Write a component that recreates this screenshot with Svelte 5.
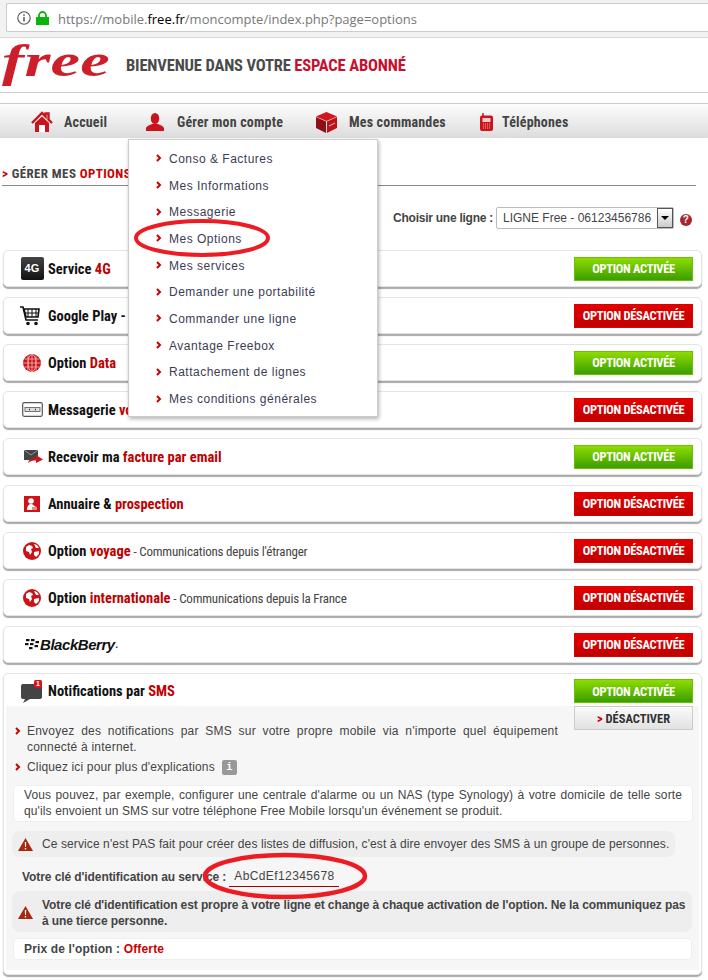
<script>
  const menu = ['Conso & Factures','Mes Informations','Messagerie','Mes Options','Mes services','Demander une portabilité','Commander une ligne','Avantage Freebox','Rattachement de lignes','Mes conditions générales'];
  const cards = [
    {icon:'4g', a:'Service ', r:'4G', on:true},
    {icon:'cart', a:'Google Play - ', r:'', on:false, wide:true},
    {icon:'data', a:'Option ', r:'Data', on:true},
    {icon:'tape', a:'Messagerie ', r:'vocale', on:false},
    {icon:'mail', a:'Recevoir ma ', r:'facture par email', on:true},
    {icon:'book', a:'Annuaire & ', r:'prospection', on:false},
    {icon:'globe', a:'Option ', r:'voyage', s:' - Communications depuis l\'étranger', on:false},
    {icon:'globe', a:'Option ', r:'internationale', s:' - Communications depuis la France', on:false},
    {icon:'bb', a:'', r:'', on:false}
  ];
</script>

{#snippet chev()}
  <svg class="chev" width="6" height="8" viewBox="0 0 6 8"><path d="M1 1l3 3-3 3" fill="none" stroke="#c00" stroke-width="2"/></svg>
{/snippet}

{#snippet warn()}
  <svg width="15" height="13" viewBox="0 0 15 13"><path d="M7.5 0L15 13H0z" fill="#a5290f"/><path d="M6.8 4h1.4l-.2 5H7zM6.8 10h1.4v1.5H6.8z" fill="#fff"/></svg>
{/snippet}

{#snippet icon(k)}
  {#if k==='4g'}
    <span class="i4g">4G</span>
  {:else if k==='cart'}
    <svg class="cart" width="20" height="20" viewBox="0 0 20 20"><path d="M0 1h3l3 13h12" fill="none" stroke="#111" stroke-width="1.6"/><path d="M4 3h15l-1 8H6z" fill="none" stroke="#111" stroke-width="1.6"/><path d="M8 3v8M12 3v8M16 3v8M5 7h14" stroke="#111" stroke-width="1"/><circle cx="8" cy="17.5" r="1.8" fill="#111"/><circle cx="16" cy="17.5" r="1.8" fill="#111"/></svg>
  {:else if k==='data'}
    <svg width="18" height="18" viewBox="0 0 18 18"><circle cx="9" cy="9" r="9" fill="#cc1418"/><g fill="none" stroke="#f6b9b9" stroke-width=".8"><ellipse cx="9" cy="9" rx="4" ry="8.5"/><path d="M9 0v18M0 9h18M1.5 5h15M1.5 13h15M5 1.5v15M13 1.5v15"/></g></svg>
  {:else if k==='tape'}
    <svg width="21" height="15" viewBox="0 0 21 15"><rect x=".7" y=".7" width="19.6" height="13.6" rx="1.5" fill="#fff" stroke="#555" stroke-width="1.2"/><rect x="3" y="5.5" width="15" height="4" fill="#ddd" stroke="#555" stroke-width=".8"/><path d="M7 7.5h1M13 7.5h1" stroke="#222" stroke-width="1.4"/></svg>
  {:else if k==='mail'}
    <svg class="mail" width="19" height="14" viewBox="0 0 19 14"><path d="M0 0h14v10H0z" fill="#444"/><path d="M0 0l7 5 7-5" fill="none" stroke="#aaa" stroke-width=".8"/><path d="M4 13c1-4 4-5 8-5V5l7 4.500-7 3.500v-2.500c-3 0-6 .5-8 2.500z" fill="#d3141c"/></svg>
  {:else if k==='book'}
    <svg width="16" height="16" viewBox="0 0 16 16"><rect width="16" height="16" fill="#cc1418"/><circle cx="7" cy="5" r="2.800" fill="#fff"/><path d="M3 13c0-3 2-5 4-5s2 1 5 3v3H3z" fill="#fff"/><path d="M8 11h5v3H8z" fill="#e88"/></svg>
  {:else if k==='globe'}
    <svg width="18" height="18" viewBox="0 0 18 18"><circle cx="9" cy="9" r="9" fill="#cc1418"/><path d="M3 5l3-2 3 1 1 2-2 1 1 3-2 3-1-3-3-1zM11 2l3 1 2 3-3 0zM11 10l5-1 0 3-3 3-2-2z" fill="#fff"/></svg>
  {:else if k==='bb'}
    <span class="bb">
      <svg width="15" height="12" viewBox="0 0 15 12"><g fill="#111"><rect x="2" y="0" width="3.500" height="2.200"/><rect x="7" y="0" width="3.500" height="2.200"/><rect x="1" y="4" width="3.500" height="2.200"/><rect x="6" y="4" width="3.500" height="2.200"/><rect x="11.500" y="2" width="3.500" height="2.200"/><rect x="10.500" y="6" width="3.500" height="2.200"/><rect x="5" y="8" width="3.500" height="2.200"/></g></svg>
      <span>BlackBerry</span><small>.</small>
    </span>
  {/if}
{/snippet}

<div class="page">
  <div class="chrome">
    <div class="url">
      <svg class="info" width="14" height="14" viewBox="0 0 14 14"><circle cx="7" cy="7" r="6.200" fill="none" stroke="#555" stroke-width="1.100"/><path d="M7 6v4.500M7 3.300v1.500" stroke="#555" stroke-width="1.500"/></svg>
      <svg width="13" height="14" viewBox="0 0 13 14"><path d="M3 6V4.500a3.500 3.500 0 0 1 7 0V6" fill="none" stroke="#0ab40a" stroke-width="1.800"/><rect y="6" width="13" height="8" fill="#0ab40a"/></svg>
      <span class="addr">https://mobile.<b>free.fr</b>/moncompte/index.php?page=options</span>
    </div>
  </div>

  <header class="head">
    <svg class="logo" width="112" height="46" viewBox="0 0 112 46"><text x="2" y="34" textLength="108" lengthAdjust="spacingAndGlyphs">free</text></svg>
    <h1>BIENVENUE DANS VOTRE <em>ESPACE ABONNÉ</em></h1>
  </header>

  <nav class="nav">
    <div class="nv n1">
      <svg width="22" height="22" viewBox="0 0 22 22"><path d="M1 12L11 2l3.500 3.500V2.500h3v6L21 12" fill="none" stroke="#c8141c" stroke-width="2.400"/><path d="M4 12v9h14v-9L11 5.500z" fill="#c8141c"/><path d="M8 14h6v7H8z" fill="#fff"/></svg>
      <span>Accueil</span>
    </div>
    <div class="nv n2">
      <svg width="18" height="18" viewBox="0 0 18 18"><ellipse cx="9" cy="5.500" rx="4.200" ry="5.500" fill="#c8141c"/><path d="M0 18v-2.500c0-2.500 4-3.500 6-4.500h6c2 1 6 2 6 4.500V18z" fill="#c8141c"/></svg>
      <span>Gérer mon compte</span>
    </div>
    <div class="nv n3">
      <svg width="21" height="21" viewBox="0 0 21 21"><path d="M10.500 0L21 4.500 10.500 9 0 4.500z" fill="#d3141c"/><path d="M0 5l10 4.500V21L0 16z" fill="#8f0f14"/><path d="M21 5l-10 4.500V21l10-5z" fill="#bd1219"/><path d="M13 14l6-3" stroke="#f4b4b4" stroke-width="1"/></svg>
      <span>Mes commandes</span>
    </div>
    <div class="nv n4">
      <svg width="13" height="18" viewBox="0 0 13 18"><path d="M3 0v3" stroke="#c8141c" stroke-width="1.500"/><rect y="2.500" width="13" height="15.500" rx="2" fill="#c8141c"/><rect x="2.500" y="5" width="8" height="4" fill="#f4cccc"/><path d="M3 11h7M3 13h7M3 15h7" stroke="#f0a0a0" stroke-width="1" stroke-dasharray="1 1"/></svg>
      <span>Téléphones</span>
    </div>

    <ul class="menu">
      {#each menu as m}
        <li>{@render chev()}<span>{m}</span></li>
      {/each}
    </ul>
  </nav>

  <div class="crumb"><i>&gt;</i> GÉRER MES <em>OPTIONS</em></div>

  <div class="line">
    <label for="sel">Choisir une ligne :</label>
    <div class="select" id="sel">
      <span>LIGNE Free - 06123456786</span>
      <div class="arrow"></div>
    </div>
    <span class="help">?</span>
  </div>

  <main class="list">
    {#each cards as c}
      <section class="card">
        <div class={c.icon==='bb' ? 'ic auto' : 'ic'}>{@render icon(c.icon)}</div>
        <div class="title">{c.a}<em>{c.r}</em>{#if c.s}<span class="sub">{c.s}</span>{/if}</div>
        <div class={c.on ? 'btn on' : 'btn off'}>{c.on ? 'OPTION ACTIVÉE' : 'OPTION DÉSACTIVÉE'}</div>
      </section>
    {/each}

    <section class="card big">
      <div class="bighead">
        <div class="ic">
          <span class="bubble">
            <svg width="22" height="23" viewBox="0 0 22 23"><path d="M3 4h17a2 2 0 0 1 2 2v11a2 2 0 0 1-2 2H10l-7 4 2-4H3a2 2 0 0 1-2-2V6a2 2 0 0 1 2-2z" fill="#444"/><rect x="14" y="0" width="8" height="8" rx="1.500" fill="#d3141c"/></svg>
            <b>1</b>
          </span>
        </div>
        <div class="title">Notifications par <em>SMS</em></div>
        <div class="btn on">OPTION ACTIVÉE</div>
      </div>
      <div class="inner">
        <div class="toprow">
          <div class="bul">
            <p class="just">{@render chev()}<span>Envoyez des notifications par SMS sur votre propre mobile via n'importe quel équipement connecté à internet.</span></p>
            <p class="click">{@render chev()}<span>Cliquez ici pour plus d'explications</span><span class="ii">i</span></p>
          </div>
          <div class="btn des"><i>&gt;</i> DÉSACTIVER</div>
        </div>
        <div class="box just2">Vous pouvez, par exemple, configurer une centrale d'alarme ou un NAS (type Synology) à votre domicile de telle sorte qu'ils envoient un SMS sur votre téléphone Free Mobile lorsqu'un événement se produit.</div>
        <div class="warn w1">{@render warn()}<span>Ce service n'est PAS fait pour créer des listes de diffusion, c'est à dire envoyer des SMS à un groupe de personnes.</span></div>
        <div class="key"><b>Votre clé d'identification au service :</b><span class="val">AbCdEf12345678</span></div>
        <div class="warn w2">{@render warn()}<b>Votre clé d'identification est propre à votre ligne et change à chaque activation de l'option. Ne la communiquez pas à une tierce personne.</b></div>
        <div class="box price"><b>Prix de l'option : <em>Offerte</em></b></div>
      </div>
    </section>
  </main>

  <svg class="ring r1" width="142" height="44" viewBox="0 0 142 44"><ellipse cx="71" cy="22" rx="66" ry="17" fill="none" stroke="#ed1c24" stroke-width="4"/></svg>
  <svg class="ring r2" width="170" height="50" viewBox="0 0 170 50"><ellipse cx="85" cy="25" rx="80" ry="21" fill="none" stroke="#ed1c24" stroke-width="4.500"/></svg>
</div>

<style>
  :global(body) { margin: 0; background: #fff; }
  .page { position: relative; width: 708px; height: 980px; overflow: hidden; font-family: "Liberation Sans", Arial, sans-serif; font-size: 12px; color: #444; letter-spacing: .15px; }
  em { font-style: normal; }

  .chrome { background: #f2f2f2; border-bottom: 1px solid #d8d8d8; padding: 3px 0 0 6px; box-sizing: border-box; height: 38px; }
  .url { height: 29px; background: #fff; border: 1px solid #ccc; border-right: 0; border-radius: 2px 0 0 2px; display: flex; align-items: center; box-sizing: border-box; padding-left: 10px; gap: 5px; }
  .addr { font-family: "Open Sans", sans-serif; font-size: 13px; color: #777; margin: 2px 0 0 4px; white-space: nowrap; letter-spacing: 0; }
  .addr b { font-weight: 400; color: #000; }

  .head { height: 55px; border-bottom: 1px solid #ccc; box-sizing: border-box; display: flex; align-items: center; position: relative; }
  .logo { flex: none; }
  .logo text { font-family: "Liberation Serif", serif; font-style: italic; font-weight: 700; font-size: 46px; fill: #cd1f2b; }
  h1 { margin: 0 0 0 14px; font-family: Roboto, sans-serif; font-stretch: 75%; font-weight: 700; font-size: 16.500px; color: #4a4a4a; letter-spacing: -.15px; white-space: nowrap; }
  h1 em { color: #c8102e; }

  .nav { margin-top: 10px; height: 35px; box-sizing: border-box; border-top: 1px solid #ccc; padding-top: 2px; background: linear-gradient(#fdfdfd, #dcdcdc); display: flex; align-items: center; padding-left: 31px; position: relative; z-index: 2; }
  .nv { display: flex; align-items: center; font-family: Roboto, sans-serif; font-stretch: 75%; font-weight: 700; font-size: 14px; letter-spacing: .18px; color: #444; white-space: nowrap; }
  .n1 { width: 115px; gap: 11px; }
  .n2 { width: 170px; gap: 13px; }
  .n3 { width: 164px; gap: 12px; }
  .n4 { gap: 9px; }

  .menu { position: absolute; left: 128px; top: 35px; width: 250px; height: 278px; margin: 0; padding: 5px 0 0; list-style: none; box-sizing: border-box; background: #fff; border: 1px solid #ccc; box-shadow: 1px 2px 4px rgba(0,0,0,.3); font-family: "Liberation Sans", sans-serif; }
  .menu li { height: 26.700px; display: flex; align-items: center; padding-left: 27px; color: #3c3c55; letter-spacing: .5px; white-space: nowrap; }
  .menu span { position: relative; top: .5px; left: -1px; }
  .chev { flex: none; margin-right: 8px; }

  .crumb { height: 48px; margin: 0 12px 0 2px; box-sizing: border-box; border-bottom: 1px solid #888; padding-top: 28px; font-size: 13px; font-family: Roboto, sans-serif; font-stretch: 75%; font-weight: 700; color: #444; letter-spacing: .4px; }
  .crumb i { font-style: normal; color: #c00; }
  .crumb em { color: #c00; }

  .line { display: flex; align-items: center; justify-content: flex-end; height: 22px; margin: 21px 16px 0 0; }
  label { font-weight: 700; color: #444; margin-right: 3px; letter-spacing: -.25px; }
  .select { width: 178px; height: 22px; box-sizing: border-box; border: 1px solid #bbb; border-radius: 2px; background: #fff; display: flex; align-items: center; padding-left: 6px; color: #444; letter-spacing: 0; white-space: nowrap; position: relative; }
  .arrow { position: absolute; right: 0; top: 0; width: 16px; height: 20px; box-sizing: border-box; border: 1px solid #555; background: linear-gradient(#fff, #ccc); }
  .arrow::after { content: ""; position: absolute; left: 3px; top: 7px; border: 4px solid transparent; border-top: 4px solid #000; }
  .help { width: 12px; height: 12px; border-radius: 50%; background: #a8262a; color: #fff; font: 700 10px/12px "Liberation Sans", sans-serif; text-align: center; margin: 4px 0 0 6px; }

  .list { margin: 21px 0 0 3px; width: 699px; display: flex; flex-direction: column; gap: 10px; }
  .card { height: 37px; box-sizing: border-box; background: #fff; border: 1px solid #e4e4e4; border-radius: 5px; box-shadow: 0 2px 1px #aaa; display: flex; align-items: center; padding-right: 8px; }
  .ic { width: 44px; flex: none; display: flex; justify-content: center; align-items: center; padding-left: 12px; box-sizing: border-box; }
  .ic.auto { width: auto; padding-left: 20px; }
  .cart { margin-right: 5px; }
  .mail { margin-left: 2px; }
  .title { flex: 1; font-family: Roboto, sans-serif; font-stretch: 75%; font-weight: 700; font-size: 14.500px; color: #111; letter-spacing: 0; white-space: pre; padding-top: 1px; }
  .title em { color: #c00000; }
  .sub { font-weight: 400; color: #444; letter-spacing: -.2px; font-size: 13px; }
  .i4g { display: block; width: 23px; height: 23px; flex: none; background: linear-gradient(#444, #111); border-radius: 2px; color: #fff; font: 700 11px/23px "Liberation Sans", sans-serif; text-align: center; }
  .bb { display: flex; align-items: center; gap: 1px; font: italic 700 15px "Liberation Sans", sans-serif; color: #111; letter-spacing: -.45px; }
  .bb small { font-size: 9px; }

  .btn { width: 119px; height: 24px; flex: none; box-sizing: border-box; font-family: Roboto, sans-serif; font-stretch: 75%; font-weight: 700; font-size: 12.500px; letter-spacing: -.3px; color: #fff; display: flex; align-items: center; justify-content: center; white-space: pre; }
  .on { background: linear-gradient(#8edc00, #3b9e00); border: 1px solid #6cc000; }
  .off { background: linear-gradient(#e30000, #bf0000); border: 1px solid #d00; }
  .des { background: linear-gradient(#fafafa, #e2e2e2); border: 1px solid #ccc; color: #333; letter-spacing: 0; }
  .des i { font-style: normal; color: #c00; }

  .big { height: 302px; display: block; padding: 0 2px 0 2px; }
  .bighead { height: 32px; box-sizing: border-box; padding-top: 2px; display: flex; align-items: center; padding-right: 6px; position: relative; }
  .bighead .ic { width: 42px; padding-left: 8px; }
  .bubble { position: relative; display: block; width: 22px; height: 23px; }
  .bubble b { position: absolute; left: 15px; top: 0; width: 6px; text-align: center; color: #fff; font: 700 7px/8px "Liberation Sans", sans-serif; }
  .inner { background: #f6f6f6; height: 264px; padding: 0 6px 0 7px; box-sizing: border-box; position: relative; }
  .toprow { display: flex; justify-content: space-between; height: 79px; }
  .bul { width: 545px; padding-top: 17px; line-height: 16px; color: #444; }
  .bul p { margin: 0; position: relative; padding-left: 14px; }
  .bul .chev { position: absolute; left: 2px; top: 4px; }
  .just { text-align: justify; letter-spacing: .22px; }
  .click { margin-top: 4px !important; display: flex; align-items: center; gap: 7px; }
  .ii { width: 15px; height: 15px; background: #999; border-radius: 2px; color: #fff; font: 700 10px/15px "Liberation Mono", monospace; text-align: center; }
  .box { background: #fff; border: 1px solid #eee; border-radius: 4px; }
  .just2 { padding: 1px 10px; line-height: 16px; text-align: justify; height: 37px; box-sizing: border-box; color: #444; letter-spacing: .12px; }
  .warn { display: flex; align-items: center; gap: 9px; background: #eee; border-radius: 8px; padding-left: 6px; box-sizing: border-box; color: #444; }
  .warn svg { flex: none; }
  .w1 { width: 663px; height: 26px; margin: 9px 0 0 -1px; letter-spacing: .1px; white-space: nowrap; }
  .w2 { width: 680px; height: 41px; margin: 0 0 0 -1px; line-height: 16px; padding: 2px 0 0 6px; letter-spacing: -.1px; }
  .key { height: 34px; display: flex; align-items: center; padding: 6px 0 0 9px; box-sizing: border-box; color: #444; letter-spacing: -.08px; }
  .val { display: inline-block; width: 110px; margin-left: 3px; padding: 0 0 2px 5px; box-sizing: border-box; border-bottom: 1px solid #a00; letter-spacing: .4px; line-height: 16px; }
  .price { height: 22px; margin-top: 6px; padding-left: 10px; display: flex; align-items: center; width: 679px; box-sizing: border-box; }
  .price em { color: #c00; }

  .ring { position: absolute; z-index: 5; pointer-events: none; }
  .r1 { left: 131px; top: 216px; }
  .r2 { left: 200px; top: 851px; }
</style>
